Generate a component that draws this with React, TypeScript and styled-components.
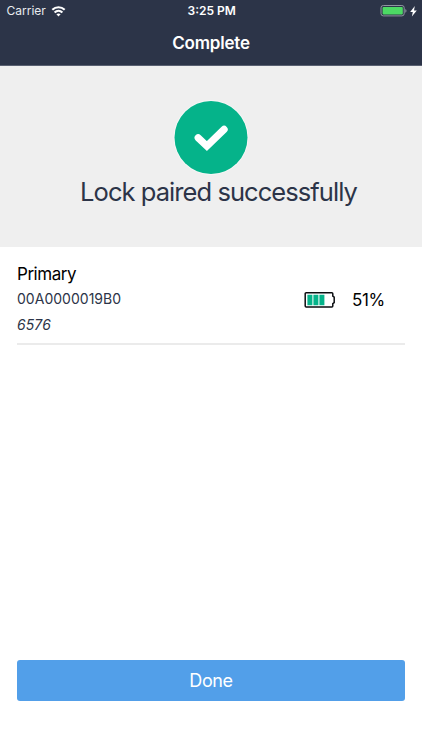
import React from "react";
import styled, { createGlobalStyle } from "styled-components";

const GlobalStyle = createGlobalStyle`
  * { box-sizing: border-box; }
  body { margin: 0; background: #fff; font-family: Inter, "Liberation Sans", sans-serif; }
`;

const Screen = styled.div`
  display: flex;
  flex-direction: column;
  width: 422px;
  height: 750px;
  background: #fff;
  overflow: hidden;
`;

const Header = styled.header`
  height: 66px;
  flex: none;
  background: #2c3448;
  border-bottom: 1px solid #596071;
  color: #fff;
`;

const StatusBar = styled.div`
  display: grid;
  grid-template-columns: 1fr auto 1fr;
  align-items: center;
  height: 22px;
  padding: 0 5px 0 6.5px;
`;

const StatusGroup = styled.div<{ $end?: boolean }>`
  display: flex;
  align-items: center;
  justify-content: ${(p) => (p.$end ? "flex-end" : "flex-start")};
  gap: 5px;
`;

const ChargingGroup = styled(StatusGroup)`
  gap: 3px;
`;

const StatusText = styled.span<{ $bold?: boolean }>`
  font-size: 12px;
  line-height: 22px;
  font-weight: ${(p) => (p.$bold ? 600 : 400)};
  color: ${(p) => (p.$bold ? "#fff" : "#e9ebef")};
`;

const Title = styled.h1`
  margin: 0;
  font-size: 17px;
  line-height: 42px;
  font-weight: 600;
  letter-spacing: -0.2px;
  text-align: center;
`;

const Banner = styled.section`
  display: flex;
  flex-direction: column;
  align-items: center;
  flex: none;
  height: 181px;
  padding-top: 34px;
  background: #efefef;
`;

const Message = styled.p`
  margin: 0;
  padding-left: 15px;
  font-size: 25.5px;
  line-height: 32px;
  letter-spacing: -0.94px;
  white-space: nowrap;
  color: #2c3448;
`;

const LockRow = styled.section`
  display: flex;
  align-items: flex-start;
  flex: none;
  height: 98px;
  margin: 0 17px;
  padding-top: 14px;
  border-bottom: 2px solid #ebebeb;
`;

const LockInfo = styled.div`
  display: flex;
  flex-direction: column;
  flex: 1;
`;

const LockName = styled.span`
  font-size: 17px;
  line-height: 26px;
  letter-spacing: -0.45px;
  color: #000;
`;

const LockSerial = styled.span`
  font-size: 14px;
  line-height: 24px;
  letter-spacing: 0.02px;
  color: #2c3448;
`;

const LockCode = styled.span`
  font-size: 14px;
  line-height: 28px;
  letter-spacing: 0.1px;
  font-style: italic;
  color: #2c3448;
`;

const Charge = styled.div`
  display: flex;
  align-items: center;
  gap: 16px;
  width: 101px;
  height: 24px;
  margin-top: 27px;
`;

const Percent = styled.span`
  font-size: 17px;
  line-height: 24px;
  letter-spacing: -0.4px;
  color: #000;
`;

const Footer = styled.footer`
  margin-top: auto;
  padding: 0 17px 49px;
`;

const DoneButton = styled.button`
  display: block;
  width: 100%;
  height: 41px;
  padding: 0;
  border: 0;
  border-radius: 3px;
  background: #529fe9;
  color: #fff;
  font-family: inherit;
  font-size: 18px;
  line-height: 41px;
  letter-spacing: -0.4px;
`;

const WifiIcon = () => (
  <svg width="15" height="11" viewBox="0 0 14 11" fill="none" stroke="#fff" strokeWidth="2.1">
    <path d="M0.8 3.8C4.3.4 9.7.4 13.2 3.8M3.1 6.4C5.3 4.3 8.7 4.3 10.9 6.4" />
    <path d="M7 10.5 4.9 8.2Q7 6.7 9.1 8.2Z" fill="#fff" stroke="none" />
  </svg>
);

const PhoneBattery = () => (
  <svg width="27" height="12" viewBox="0 0 27 12">
    <rect x="1" y="0.5" width="23.2" height="10.4" rx="2.3" fill="none" stroke="#8f95a0" />
    <rect x="2.6" y="1.9" width="20.2" height="7.6" rx="1" fill="#4cd964" />
    <path d="M25.3 3.9v3.8q1.2-.5 1.2-1.9t-1.2-1.9Z" fill="#8f95a0" />
  </svg>
);

const BoltIcon = () => (
  <svg width="7" height="11" viewBox="0 0 7 11">
    <path d="M4.8 0 .2 5.9h2.6L1.9 10.6 6.8 4.4H4Z" fill="#fff" />
  </svg>
);

const SuccessIcon = () => (
  <svg width="76" height="76" viewBox="0 0 76 76">
    <circle cx="38" cy="37.5" r="37.4" fill="#f8f8f8" />
    <circle cx="38" cy="37.5" r="36.5" fill="#05b38a" />
    <path d="M25.2 37.8 33.9 46.1 51.1 29.4" fill="none" stroke="#fff" strokeWidth="7.2" strokeLinecap="round" />
  </svg>
);

const LockBattery = () => (
  <svg width="32" height="17" viewBox="0 0 32 17">
    <path
      d="M2.2 .8H27.8Q28.8 .8 28.8 1.8V4.1L30.2 5.1V10.7L28.8 11.7V13.9Q28.8 14.9 27.8 14.9H2.2Q1.2 14.9 1.2 13.9V1.8Q1.2 .8 2.2 .8Z"
      fill="none"
      stroke="#0b0d10"
      strokeWidth="1.5"
    />
    <path d="M3.4 2.8h5v10.4h-5ZM9.4 2.8h5v10.4h-5ZM15.4 2.8h5v10.4h-5Z" fill="#05b38a" />
  </svg>
);

export default function App() {
  return (
    <Screen>
      <GlobalStyle />
      <Header>
        <StatusBar>
          <StatusGroup>
            <StatusText>Carrier</StatusText>
            <WifiIcon />
          </StatusGroup>
          <StatusText $bold>3:25 PM</StatusText>
          <ChargingGroup $end>
            <PhoneBattery />
            <BoltIcon />
          </ChargingGroup>
        </StatusBar>
        <Title>Complete</Title>
      </Header>
      <Banner>
        <SuccessIcon />
        <Message>Lock paired successfully</Message>
      </Banner>
      <LockRow>
        <LockInfo>
          <LockName>Primary</LockName>
          <LockSerial>00A0000019B0</LockSerial>
          <LockCode>6576</LockCode>
        </LockInfo>
        <Charge>
          <LockBattery />
          <Percent>51%</Percent>
        </Charge>
      </LockRow>
      <Footer>
        <DoneButton type="button">Done</DoneButton>
      </Footer>
    </Screen>
  );
}
